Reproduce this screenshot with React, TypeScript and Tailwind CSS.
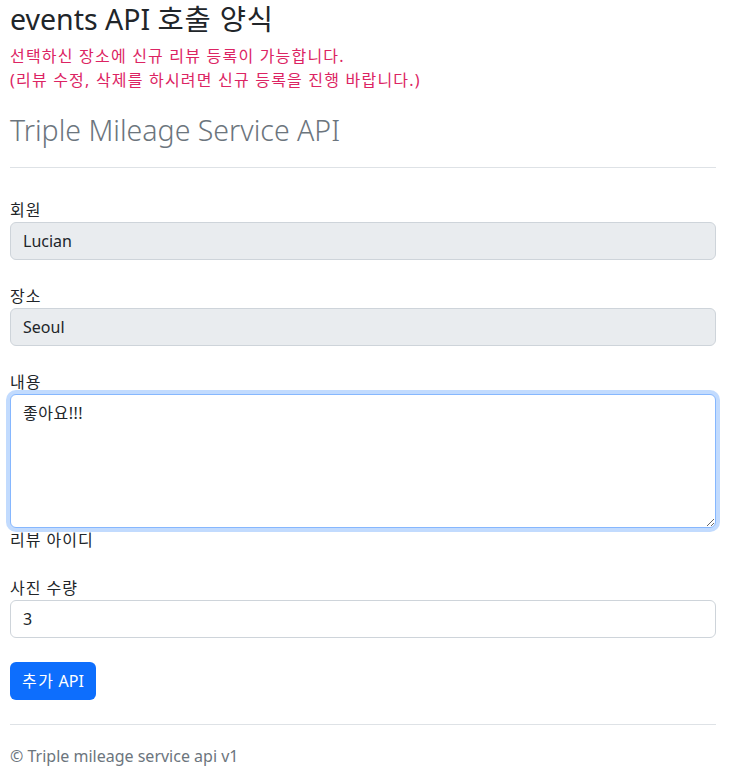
import { useState } from "react"

const font = { fontFamily: '"Noto Sans", "Noto Sans CJK KR", sans-serif' }

const App = () => {
  const [content, setContent] = useState("좋아요!!!")
  const [photos, setPhotos] = useState("3")

  return (
    <div className="w-[734px] min-h-[777px] bg-white pl-[10px] pr-[18px] text-[#212529]" style={font}>

      <h1 className="pt-[2px] text-[28.5px] leading-[34px] font-normal">
        events API <span className="tracking-[0.8px]">호출 양식</span>
      </h1>
      <p className="mt-2 text-base leading-6 tracking-[1.2px] text-[#dc2463]">
        선택하신 장소에 신규 리뷰 등록이 가능합니다.
        <br />
        (리뷰 수정, 삭제를 하시려면 신규 등록을 진행 바랍니다.)
      </p>

      <h2 className="mt-5 text-[28.5px] leading-[36px] font-light text-[#6c757d]">Triple Mileage Service API</h2>
      <hr className="mt-[19px] border-t border-[#dee2e6]" />

      <form className="flex flex-col pt-[30px]">
        <label className="text-base leading-6 tracking-[1px]">회원</label>
        <input
          type="text" value="Lucian" readOnly
          className="h-[38px] w-full rounded-[6px] border border-[#ced4da] bg-[#e9ecef] px-3 text-base text-[#212529] outline-none"
        />

        <label className="mt-6 text-base leading-6 tracking-[1px]">장소</label>
        <input
          type="text" value="Seoul" readOnly
          className="h-[38px] w-full rounded-[6px] border border-[#ced4da] bg-[#e9ecef] px-3 text-base text-[#212529] outline-none"
        />

        <label className="mt-6 text-base leading-6 tracking-[1px]">내용</label>
        <textarea
          value={content} onChange={(e) => setContent(e.target.value)}
          className="block h-[134px] w-full rounded-[6px] border border-[#86b7fe] bg-white px-3 py-[6px] text-base leading-6 tracking-[0.5px] text-[#212529] shadow-[0_0_0_4px_rgba(13,110,253,0.25)] outline-none"
        />
        <label className="text-base leading-6 tracking-[1px]">리뷰 아이디</label>

        <label className="mt-6 text-base leading-6 tracking-[1px]">사진 수량</label>
        <input
          type="text" value={photos} onChange={(e) => setPhotos(e.target.value)}
          className="h-[38px] w-full rounded-[6px] border border-[#ced4da] bg-white px-3 text-base text-[#212529] outline-none"
        />

        <div className="mt-6">
          <button type="button" className="h-[38px] rounded-[6px] bg-[#0d6efd] px-3 text-base text-white">
            <span className="tracking-[1.5px]">추가</span> API
          </button>
        </div>
      </form>

      <hr className="mt-6 border-t border-[#dee2e6]" />
      <footer className="mt-[19px] text-base leading-6 text-[#6c757d]">© Triple mileage service api v1</footer>
    </div>
  )
}

export default App
